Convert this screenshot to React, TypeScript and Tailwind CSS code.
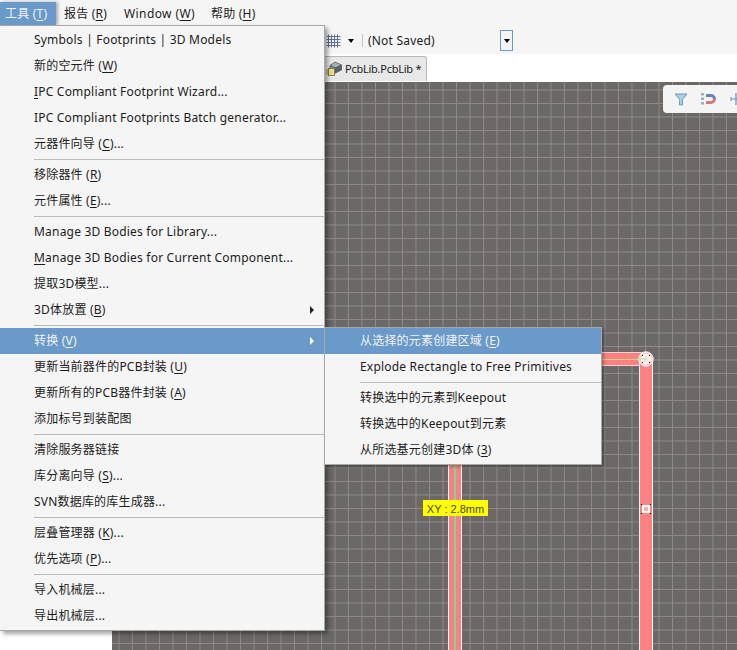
import React from "react";

const FONT = "[font-family:'Noto_Sans','Noto_Sans_CJK_SC',sans-serif]";

type Row = { t?: React.ReactNode; sep?: boolean; hi?: boolean; arrow?: boolean };

const U = ({ children }: { children: React.ReactNode }) => <u className="underline underline-offset-2">{children}</u>;

const main: Row[] = [
  { t: "Symbols | Footprints | 3D Models" },
  { t: <>新的空元件 (<U>W</U>)</> },
  { t: <><U>I</U>PC Compliant Footprint Wizard...</> },
  { t: "IPC Compliant Footprints Batch generator..." },
  { t: <>元器件向导 (<U>C</U>)...</> },
  { sep: true },
  { t: <>移除器件 (<U>R</U>)</> },
  { t: <>元件属性 (<U>E</U>)...</> },
  { sep: true },
  { t: "Manage 3D Bodies for Library..." },
  { t: <><U>M</U>anage 3D Bodies for Current Component...</> },
  { t: "提取3D模型..." },
  { t: <>3D体放置 (<U>B</U>)</>, arrow: true },
  { sep: true },
  { t: <>转换 (<U>V</U>)</>, arrow: true, hi: true },
  { t: <>更新当前器件的PCB封装 (<U>U</U>)</> },
  { t: <>更新所有的PCB器件封装 (<U>A</U>)</> },
  { t: "添加标号到装配图" },
  { sep: true },
  { t: "清除服务器链接" },
  { t: <>库分离向导 (<U>S</U>)...</> },
  { t: "SVN数据库的库生成器..." },
  { sep: true },
  { t: <>层叠管理器 (<U>K</U>)...</> },
  { t: <>优先选项 (<U>P</U>)...</> },
  { sep: true },
  { t: "导入机械层..." },
  { t: "导出机械层..." },
];

const sub: Row[] = [
  { t: <>从选择的元素创建区域 (<U>E</U>)</>, hi: true },
  { t: "Explode Rectangle to Free Primitives" },
  { sep: true },
  { t: "转换选中的元素到Keepout" },
  { t: "转换选中的Keepout到元素" },
  { t: <>从所选基元创建3D体 (<U>3</U>)</> },
];

function MenuRows({ rows, pad }: { rows: Row[]; pad: string }) {
  return (
    <>
      {rows.map((r, i) =>
        r.sep ? (
          <div key={i} className={`h-[5px] flex items-center ${pad}`}>
            <div className="h-[1px] w-full bg-[#bcbcbc]" />
          </div>
        ) : (
          <div
            key={i}
            className={`h-[26px] flex items-center justify-between whitespace-nowrap ${pad} ${r.hi ? "bg-[#6a9ac9] text-[#f2f2f2]" : "text-[#1c1c1c]"}`}
          >
            <span>{r.t}</span>
            {r.arrow && (
              <span className={`mr-[10px] w-0 h-0 border-y-[4px] border-y-transparent border-l-[4px] ${r.hi ? "border-l-white" : "border-l-[#222222]"}`} />
            )}
          </div>
        )
      )}
    </>
  );
}

function Caret() {
  return <span className="w-0 h-0 border-x-[3.5px] border-x-transparent border-t-[4px] border-t-black" />;
}

export default function App() {
  return (
    <div className={`relative w-[737px] h-[650px] overflow-hidden flex flex-col bg-white text-[12px] tracking-[0.2px] ${FONT}`}>
      {/* top chrome */}
      <div className="h-[54px] bg-[#f5f5f5] flex flex-col shrink-0">
        <div className="h-[25px] pt-[2px] flex items-stretch text-[#1c1c1c] whitespace-nowrap">
          <div className="w-[56px] bg-[#6a9ac9] text-[#f2f2f2] pl-[5px] flex items-center shadow-[2px_0_3px_rgba(0,0,0,0.3)]">
            工具 (<U>T</U>)
          </div>
          <div className="flex items-center pl-[8px] gap-[16px]">
            <span>报告 (<U>R</U>)</span>
            <span className="ml-[1px] tracking-[0.4px]">Window (<U>W</U>)</span>
            <span>帮助 (<U>H</U>)</span>
          </div>
        </div>
        <div className="h-[29px] flex items-center pl-[326px] pt-[2px] text-[#1c1c1c] whitespace-nowrap">
          <svg width="15" height="14" viewBox="0 0 15 14" className="shrink-0">
            <path d="M2.5 0.5V13.5M5.5 0.5V13.5M8.5 0.5V13.5M11.5 0.5V13.5M0.5 2.5H14.5M0.5 5.5H14.5M0.5 8.5H14.5M0.5 11.5H14.5" stroke="#5e6f9c" strokeWidth="1" />
          </svg>
          <div className="ml-[7px] flex"><Caret /></div>
          <div className="ml-[8px] w-[1px] h-[13px] bg-[#c4c4c4]" />
          <span className="ml-[5px] w-[132px]">(Not Saved)</span>
          <div className="w-[13px] h-[21px] border border-[#6a9ac9] flex items-center justify-center"><Caret /></div>
        </div>
      </div>

      {/* tabs */}
      <div className="h-[28px] bg-white flex items-end pl-[325px] shrink-0">
        <div className="h-[25px] w-[102px] mb-[1px] bg-[#e8e8e8] border-t border-r border-[#b8b8b8] rounded-tr-[3px] flex items-center whitespace-nowrap text-[11px] tracking-[-0.25px] text-[#1c1c1c]">
          <svg width="17" height="18" viewBox="0 0 17 18" className="ml-[1px] shrink-0">
            <path d="M9 2L15.5 5L9.5 8L4 5.5Z" fill="#9fb3bd" stroke="#4f5a66" strokeWidth="0.8" />
            <path d="M4 5.5L9.5 8V13L4 10.5Z" fill="#7d8d99" stroke="#4f5a66" strokeWidth="0.8" />
            <path d="M9.5 8L15.5 5V10L9.5 13Z" fill="#56626e" stroke="#4f5a66" strokeWidth="0.8" />
            <rect x="2.5" y="8.5" width="6" height="7" fill="#f0dc8c" stroke="#8c7a35" strokeWidth="0.9" />
            <path d="M0 10H2.5M0 12H2.5M0 14H2.5" stroke="#8c7a35" strokeWidth="0.8" />
          </svg>
          <span className="ml-[2px]">PcbLib.PcbLib *</span>
        </div>
      </div>

      {/* body */}
      <div className="flex-1 flex min-h-0">
        <div className="w-[112px] bg-white shrink-0" />
        <div className="relative flex-1 overflow-hidden bg-[#6b6866] bg-[linear-gradient(to_right,#908b88_1px,transparent_1px),linear-gradient(to_bottom,#908b88_1px,transparent_1px)] bg-[length:13.5px_13.5px] bg-[position:6.5px_7.5px]">
          {/* left trace */}
          <div className="absolute left-[336px] top-[270px] bottom-0 w-[14px] bg-[#ff8080] border-x border-white flex justify-center">
            <div className="w-[2px] h-full bg-[#7bd6a0]" />
          </div>
          {/* top trace */}
          <div className="absolute left-[470px] top-[270px] w-[64px] h-[14px] bg-[#ff8080] border-y border-[#ffd6d6] flex items-center">
            <div className="h-[1px] w-full bg-[#b5e08a]" />
          </div>
          {/* right trace */}
          <div className="absolute left-[527px] top-[277px] bottom-0 w-[14px] bg-[#ff8080] border-x border-white" />

          {/* corner handle */}
          <svg width="16" height="16" viewBox="0 0 16 16" className="absolute left-[526px] top-[269px]">
            <circle cx="8" cy="8" r="7.2" fill="#ffc9c9" stroke="#ffffff" strokeWidth="1" />
            <circle cx="8" cy="8" r="4.5" fill="#ffe6e6" stroke="#ffffff" strokeWidth="1.4" />
            <path d="M0.5 8H9" stroke="#a8e87c" strokeWidth="1" />
            <path d="M4 4h1v1H4zM11 4h1v1h-1zM4 11h1v1H4zM11 11h1v1h-1z" fill="#000000" />
          </svg>
          {/* mid handle */}
          <svg width="10" height="10" viewBox="0 0 10 10" className="absolute left-[529px] top-[422px]">
            <rect x="1" y="1" width="8" height="8" fill="#ffffff" />
            <rect x="3" y="3" width="4" height="4" fill="#ffb0b0" />
            <path d="M0 0h1v1H0zM9 0h1v1H9zM0 9h1v1H0zM9 9h1v1H9z" fill="#000000" />
          </svg>

          <div className="absolute left-[311px] top-[418px] w-[65px] h-[16px] pt-[2px] bg-[#ffff00] text-[#444400] text-[11px] tracking-normal flex items-center justify-center [font-family:'Liberation_Sans',sans-serif] whitespace-nowrap">
            XY : 2.8mm
          </div>

          {/* floating filter panel */}
          <div className="absolute left-[551px] top-[3px] w-[90px] h-[28px] bg-[#f4f4f4] rounded-[4px] flex items-center pl-[11px]">
            <svg width="14" height="14" viewBox="0 0 14 14">
              <path d="M1 2H13L8.5 7.5V13H5.5V7.5Z" fill="#a9d0e0" stroke="#6f9fb5" strokeWidth="1" />
            </svg>
            <svg width="16" height="14" viewBox="0 0 16 14" className="ml-[13px]">
              <path d="M5 2H10A5 5 0 0 1 15 7H12A2 2 0 0 0 10 5H5Z" fill="#5f86c0" />
              <path d="M5 12H10A5 5 0 0 0 15 7H12A2 2 0 0 1 10 9H5Z" fill="#d9767f" />
              <path d="M1.5 1V13" stroke="#9eb0b8" strokeWidth="3" strokeDasharray="2.5 2" />
            </svg>
            <svg width="14" height="14" viewBox="0 0 14 14" className="ml-[13px]">
              <path d="M6 1V13M1 7H13" stroke="#5b8fd0" strokeWidth="1.2" />
              <path d="M1 5V9" stroke="#5b8fd0" strokeWidth="1" />
            </svg>
          </div>
        </div>
      </div>

      {/* main dropdown */}
      <div className="absolute left-0 top-[25px] w-[325px] h-[606px] bg-[#f5f5f5] border-r border-b border-t border-[#a8a8a8] pt-[1px] shadow-[3px_3px_4px_rgba(0,0,0,0.35)]">
        <MenuRows rows={main} pad="pl-[34px]" />
      </div>

      {/* submenu */}
      <div className="absolute left-[324px] top-[327px] w-[278px] h-[138px] bg-[#f5f5f5] border border-[#a8a8a8] shadow-[2px_2px_3px_rgba(0,0,0,0.3)]">
        <MenuRows rows={sub} pad="pl-[35px]" />
      </div>
    </div>
  );
}
